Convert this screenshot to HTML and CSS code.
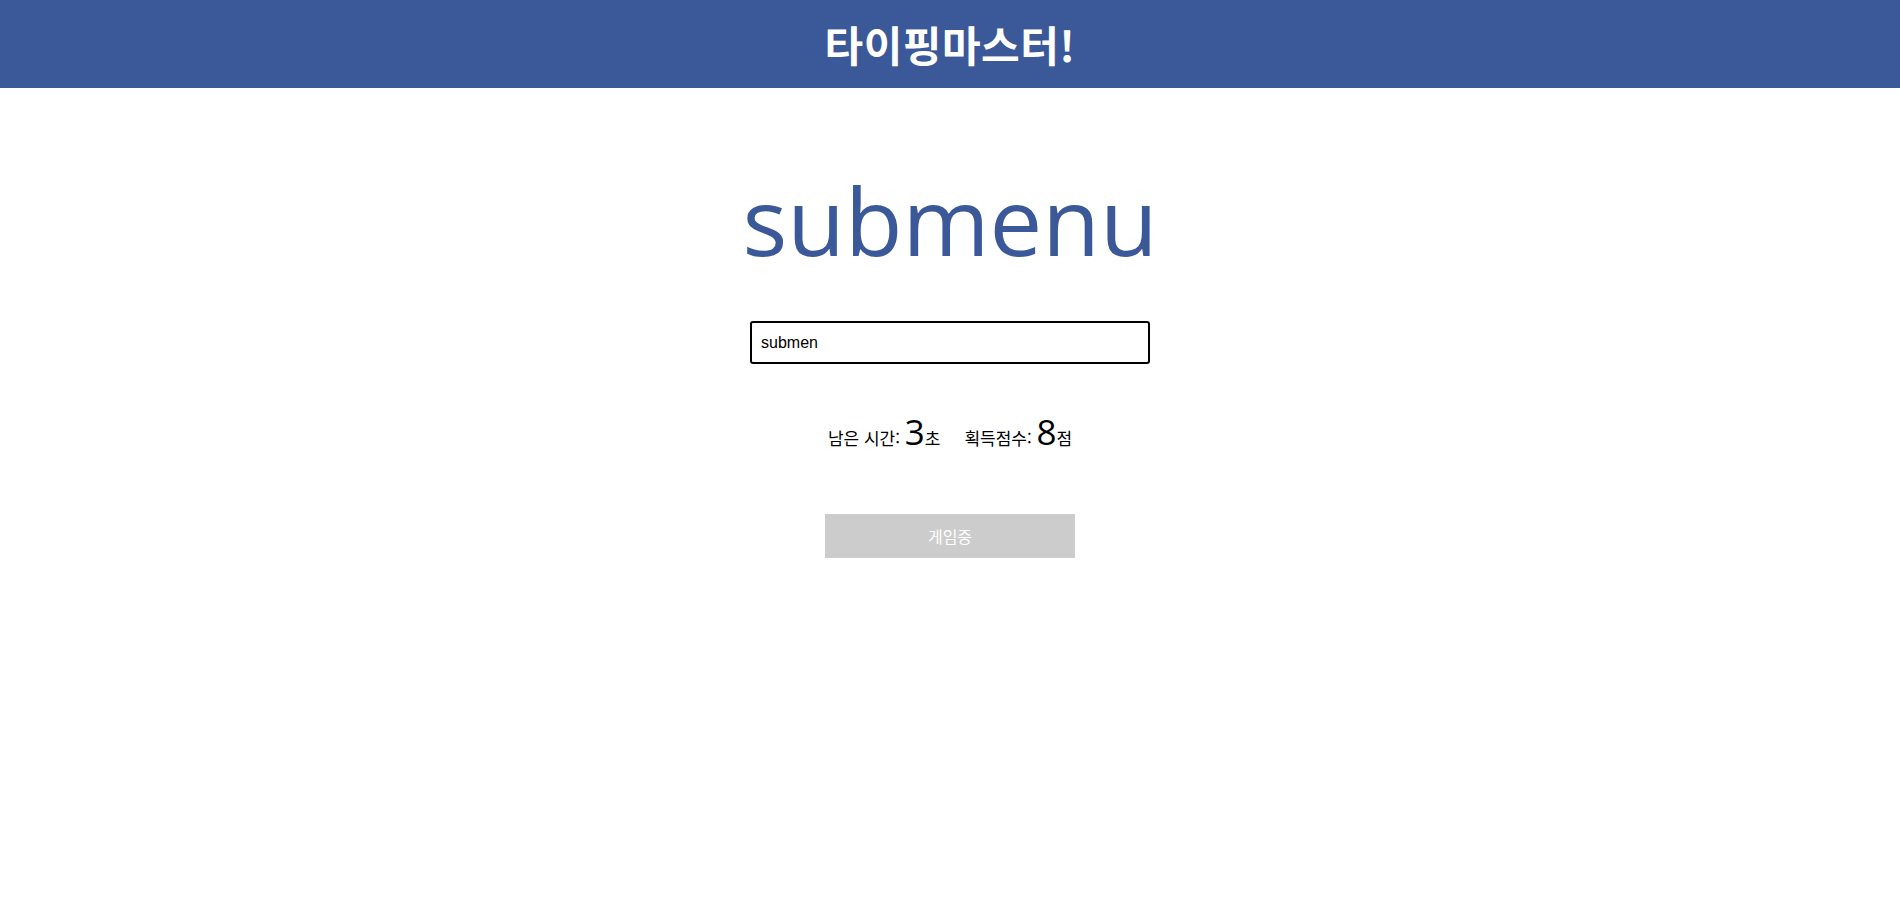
FILE: index.html
```html
<!DOCTYPE html>
<html lang="ko">
<head>
<meta charset="utf-8">
<title>타이핑마스터!</title>
<link rel="stylesheet" href="styles.css">
</head>
<body>
<header class="header">
  <h1 class="header-title">타이핑마스터!</h1>
</header>
<main class="game">
  <div class="word">submenu</div>
  <input class="word-input" type="text" value="submen" autofocus>
  <div class="info">
    <span class="info-item">남은 시간: <span class="big">3</span>초</span>
    <span class="info-item">획득점수: <span class="big">8</span>점</span>
  </div>
  <button class="button">게임중</button>
</main>
</body>
</html>
```

FILE: styles.css
```css
html, body {
  margin: 0;
  padding: 0;
}
body {
  font-family: "Noto Sans CJK KR", "Noto Sans", sans-serif;
  background: #fff;
  height: 905px;
  overflow: hidden;
}
.header {
  background: #3b5998;
  height: 88px;
  display: flex;
  align-items: center;
  justify-content: center;
}
.header-title {
  margin: 0;
  color: #fff;
  font-size: 42px;
  font-weight: 700;
  line-height: 1;
  letter-spacing: 0.5px;
}
.game {
  display: flex;
  flex-direction: column;
  align-items: center;
}
.word {
  margin-top: 68px;
  color: #3b5998;
  font-family: "Open Sans", "Noto Sans", sans-serif;
  font-size: 94px;
  line-height: 128px;
}
.word-input {
  margin-top: 37px;
  box-sizing: border-box;
  width: 400px;
  height: 43px;
  padding: 0 9px;
  border: 2px solid #000;
  border-radius: 3px;
  font-family: "Liberation Sans", Arial, sans-serif;
  font-size: 16px;
  color: #000;
  caret-color: #000;
  outline: none;
}
.info {
  margin-top: 50px;
  display: flex;
  gap: 24px;
  font-size: 17px;
  color: #000;
  align-items: baseline;
}
.big {
  font-family: "Open Sans", "Noto Sans", sans-serif;
  font-size: 35px;
  line-height: 1;
}
.button {
  margin-top: 64px;
  width: 250px;
  height: 44px;
  border: none;
  background: #ccc;
  color: #fff;
  font-family: "Noto Sans CJK KR", sans-serif;
  font-size: 16px;
}
```
